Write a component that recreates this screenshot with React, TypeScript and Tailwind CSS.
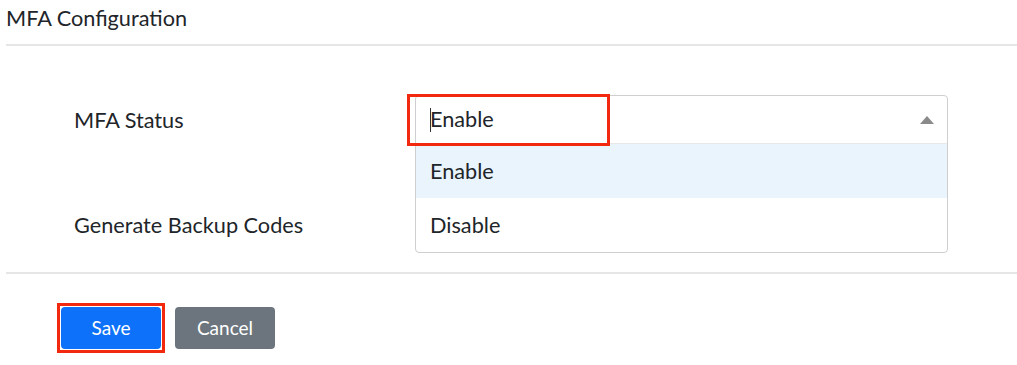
import React from "react";

export default function App() {
  return (
    <div className="w-[1017px] h-[365px] bg-white pl-[6px] text-[#212529]" style={{ fontFamily: "Lato, 'Open Sans', sans-serif" }}>
      <div className="h-[44px] pt-[4px] text-[21.7px] leading-[28px]">MFA Configuration</div>
      <div className="h-[2px] bg-[#e6e6e6]" />
      <div className="flex pt-[49px] h-[226px]">
        <div className="w-[409px] pl-[68px] text-[21.7px]">
          <div className="h-[49px] flex items-center pt-[2px]">MFA Status</div>
          <div className="h-[54px]" />
          <div className="h-[54px] flex items-center">Generate Backup Codes</div>
        </div>
        <div className="relative w-[533px] h-[158px] border border-[#cfcfcf] rounded-[4px] bg-white text-[21.7px]">
          <div className="h-[47px] flex items-center pl-[14px] relative">
            <span className="absolute left-[14px] top-[12px] w-[1px] h-[24px] bg-[#333]" />
            <span>Enable</span>
            <svg className="absolute right-[13px] top-[20px]" width="14" height="8" viewBox="0 0 14 8">
              <polygon points="7,0 14,8 0,8" fill="#8a8a8a" />
            </svg>
          </div>
          <div className="h-[55px] flex items-center pl-[14px] bg-[#eaf4fd] border-t border-[#e8e8e8]">Enable</div>
          <div className="h-[54px] flex items-center pl-[14px]">Disable</div>
          <div className="absolute left-[-9px] top-[-2px] w-[203px] h-[52px] border-[3px] border-[#f3290f]" />
        </div>
      </div>
      <div className="h-[2px] bg-[#e6e6e6]" />
      <div className="flex items-start gap-[10px] pt-[29px] pl-[51px]">
        <div className="border-[3px] border-[#f3290f] p-[1px]">
          <button className="block w-[100px] h-[42px] rounded-[4px] bg-[#0d72f9] text-white text-[19px]">Save</button>
        </div>
        <div className="pt-[4px]">
          <button className="block w-[100px] h-[42px] rounded-[4px] bg-[#6c757d] text-white text-[19px]">Cancel</button>
        </div>
      </div>
    </div>
  );
}
